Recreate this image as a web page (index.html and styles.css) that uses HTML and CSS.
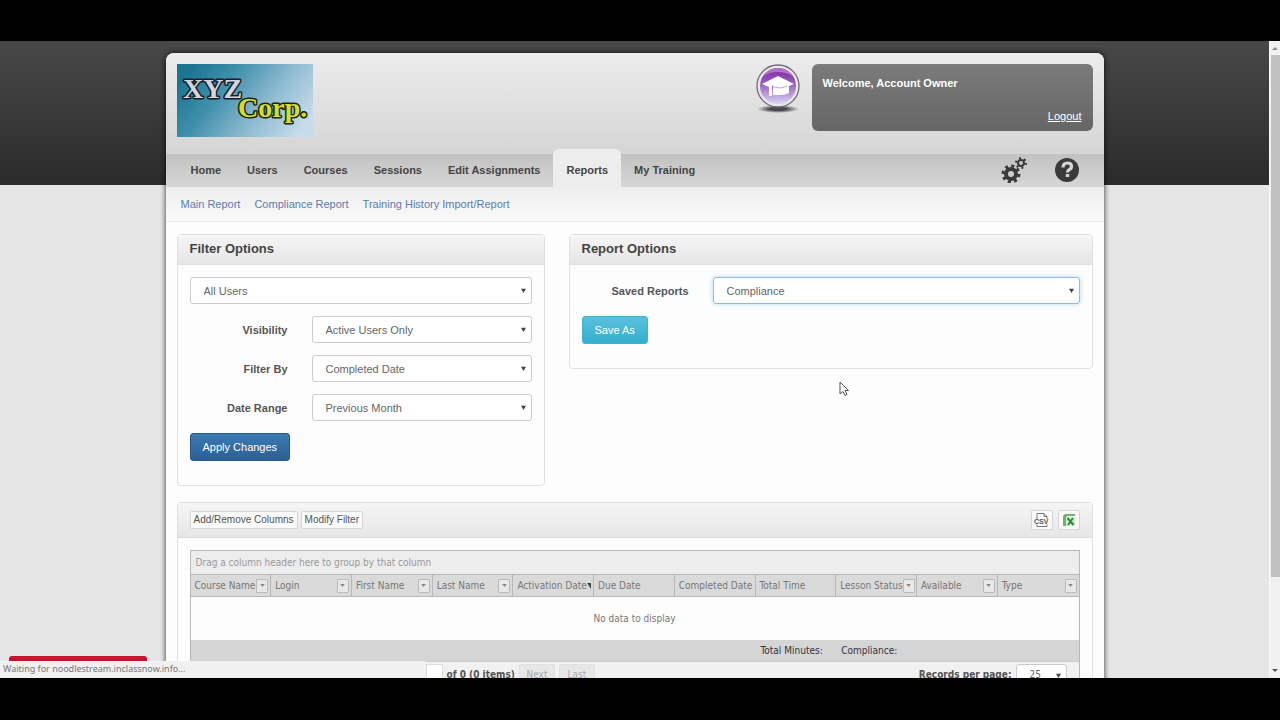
FILE: index.html
```html
<!DOCTYPE html>
<html lang="en">
<head>
<meta charset="utf-8">
<title>Reports</title>
<link rel="stylesheet" href="styles.css">
</head>
<body>
<div class="viewport">
  <div class="page">
    <div class="sheet">
      <header class="header">
        <svg class="logo" viewBox="0 0 136 73" role="img" aria-label="XYZ Corp.">
          <defs>
            <linearGradient id="sky" x1="0" y1="0.3" x2="1" y2="0.7">
              <stop offset="0" stop-color="#1b7592"/><stop offset="0.3" stop-color="#4090ab"/>
              <stop offset="0.65" stop-color="#8dbad0"/><stop offset="1" stop-color="#c6dcea"/>
            </linearGradient>
          </defs>
          <rect width="136" height="73" fill="url(#sky)"/>
          <g font-family="Liberation Serif, serif" font-weight="bold" stroke-linejoin="round" paint-order="stroke">
            <text x="6" y="34" font-size="28" fill="#d5d3dc" stroke="#15202a" stroke-width="3">XYZ</text>
            <text x="61" y="53" font-size="28" fill="#d3df2b" stroke="#1d2408" stroke-width="3">Corp.</text>
          </g>
        </svg>
        <div class="account">
          <svg class="badge" viewBox="0 0 46 52" aria-hidden="true">
            <defs>
              <linearGradient id="orb" x1="0" y1="0" x2="0" y2="1">
                <stop offset="0" stop-color="#7b2a9c"/><stop offset="0.45" stop-color="#9b5fc0"/><stop offset="1" stop-color="#d9d6f6"/>
              </linearGradient>
              <radialGradient id="shade"><stop offset="0.4" stop-color="#4b4650"/><stop offset="1" stop-color="#4b4650" stop-opacity="0"/></radialGradient>
            </defs>
            <ellipse cx="23" cy="45" rx="21" ry="4" fill="url(#shade)"/>
            <circle cx="23" cy="22" r="21" fill="#e9e6ee" stroke="#6d6a72" stroke-width="1.3"/>
            <circle cx="23" cy="22" r="18" fill="url(#orb)"/>
            <path d="M8 12Q13 4 23 4t15 8q-7-4-15-4T8 12z" fill="#c58bd8" opacity=".7"/>
            <path d="M7 20 23 12l16 8-5 2v7q-4 2-8 2h-8v-9l-1-1v11h-3v-9z" fill="#fff"/>
            <path d="m18 23 8 1 6-2" fill="none" stroke="#c3a5df"/>
          </svg>
          <div class="welcome">
            <strong>Welcome, Account Owner</strong>
            <a href="#">Logout</a>
          </div>
        </div>
      </header>
      <nav class="nav">
        <a href="#">Home</a><a href="#">Users</a><a href="#">Courses</a><a href="#">Sessions</a><a href="#">Edit Assignments</a><a href="#" class="current">Reports</a><a href="#">My Training</a>
        <div class="tools">
          <button type="button" aria-label="Settings">
            <svg viewBox="0 0 26 26" fill="none" stroke="#3b3b3b">
              <circle cx="10" cy="17" r="5" stroke-width="4"/>
              <circle cx="10" cy="17" r="8" stroke-width="3" stroke-dasharray="3 3.283"/>
              <circle cx="20" cy="6" r="3" stroke-width="2"/>
              <circle cx="20" cy="6" r="5" stroke-width="2" stroke-dasharray="2 3.236"/>
            </svg>
          </button>
          <button type="button" aria-label="Help">
            <svg viewBox="0 0 26 26" fill="none">
              <circle cx="13" cy="13" r="12" fill="#3b3b3b"/>
              <path d="M9 10.500q0-4.500 4.500-4.500 4 0 4 3.500 0 2-2.300 3.200-1.700.9-1.700 2.800" stroke="#d6d6d6" stroke-width="3.200"/>
              <path d="M11.800 17h3.400v3h-3.400z" fill="#d6d6d6"/>
            </svg>
          </button>
        </div>
      </nav>
      <div class="subnav"><a href="#">Main Report</a><a href="#">Compliance Report</a><a href="#">Training History Import/Report</a></div>
      <main class="content">
        <div class="panels">
          <section class="panel filter">
            <h2>Filter Options</h2>
            <form class="fields">
              <select class="wide" aria-label="Users"><option>All Users</option></select>
              <label for="visibility">Visibility</label><select id="visibility"><option>Active Users Only</option></select>
              <label for="filterby">Filter By</label><select id="filterby"><option>Completed Date</option></select>
              <label for="range">Date Range</label><select id="range"><option>Previous Month</option></select>
              <button type="button" class="btn primary">Apply Changes</button>
            </form>
          </section>
          <section class="panel report">
            <h2>Report Options</h2>
            <form class="fields">
              <label for="saved">Saved Reports</label><select id="saved" class="active"><option>Compliance</option></select>
              <button type="button" class="btn info">Save As</button>
            </form>
          </section>
        </div>
        <section class="panel results">
          <div class="toolbar">
            <button type="button" class="small">Add/Remove Columns</button>
            <button type="button" class="small">Modify Filter</button>
            <button type="button" class="small export first" aria-label="Export to CSV">
              <svg viewBox="0 0 16 16"><path d="M3 7V1.500h7l3 3V7M10 1.500v3h3M3 12.500v2h10v-2" fill="none" stroke="#777"/><text x="0" y="12" font-family="Liberation Sans, sans-serif" font-size="7" font-weight="bold" fill="#555">CSV</text></svg>
            </button>
            <button type="button" class="small export" aria-label="Export to Excel">
              <svg viewBox="0 0 16 16"><path d="M2 14V5q0-3 3-3h9v2H7Q5 4 5 6v8z" fill="#69b56a"/><path d="M5 5h9v9H5z" fill="#d5ecd2"/><path d="m6.500 6 6 7M12 6l-5 7" stroke="#32893a" stroke-width="2"/></svg>
            </button>
          </div>
          <div class="grid">
            <div class="grouping">Drag a column header here to group by that column</div>
            <table>
              <thead><tr>
                <th><div>Course Name<button type="button" aria-label="Filter Course Name"></button></div></th>
                <th><div>Login<button type="button" aria-label="Filter Login"></button></div></th>
                <th><div>First Name<button type="button" aria-label="Filter First Name"></button></div></th>
                <th><div>Last Name<button type="button" aria-label="Filter Last Name"></button></div></th>
                <th><div>Activation Date<svg class="sort" viewBox="0 0 4 6"><path d="M0 0h4v6z" fill="#444"/></svg></div></th>
                <th><div>Due Date</div></th>
                <th><div>Completed Date</div></th>
                <th><div>Total Time</div></th>
                <th><div>Lesson Status<button type="button" aria-label="Filter Lesson Status"></button></div></th>
                <th><div>Available<button type="button" aria-label="Filter Available"></button></div></th>
                <th><div>Type<button type="button" aria-label="Filter Type"></button></div></th>
              </tr></thead>
              <tbody><tr><td colspan="11">No data to display</td></tr></tbody>
              <tfoot><tr><td colspan="7"></td><td>Total Minutes:</td><td colspan="3">Compliance:</td></tr></tfoot>
            </table>
            <div class="pager">
              <input type="text" aria-label="Page number">
              <span>of 0 (0 items)</span>
              <button type="button" disabled>Next</button>
              <button type="button" disabled>Last</button>
              <label for="perpage">Records per page:</label>
              <select id="perpage"><option>25</option></select>
            </div>
          </div>
        </section>
      </main>
    </div>
    <div class="feedback"></div>
    <div class="status">Waiting for noodlestream.inclassnow.info...</div>
  </div>
  <div class="scrollbar">
    <svg viewBox="0 0 10 14"><path d="m2 9 3-3 3 3z" fill="#8a8a8a"/></svg>
    <div class="thumb"></div>
    <svg viewBox="0 0 10 14"><path d="m2 5 3 3 3-3z" fill="#555"/></svg>
  </div>
  <svg class="cursor" viewBox="0 0 10 16"><path d="M1 1v12l3-2.500 2 4 2-1-2-4h3.500z" fill="#fff" stroke="#555"/></svg>
</div>
</body>
</html>
```
FILE: styles.css
```css
* { box-sizing: border-box; }
body {
  margin: 0;
  height: 100vh;
  padding: 41px 0 42px;
  display: flex;
  background: #000;
  color: #555;
  font: 11px/16px "Liberation Sans", Arial, sans-serif;
}
button, select, input { font: inherit; color: inherit; margin: 0; }
a { text-decoration: none; color: inherit; }
.viewport { flex: 1; display: flex; position: relative; overflow: hidden; }
.page {
  flex: 1;
  min-width: 0;
  position: relative;
  overflow: hidden;
  padding: 12px 16px 0;
  background: linear-gradient(#484848, #2b2b2b) top / 100% 144px no-repeat #e6e6e6;
}
.sheet {
  max-width: 938px;
  margin: 0 auto;
  background: #fdfdfd;
  border-radius: 8px 8px 0 0;
  box-shadow: 0 0 5px 1px rgba(0, 0, 0, 0.6);
}

/* Header */
.header {
  display: flex;
  justify-content: space-between;
  align-items: flex-start;
  min-height: 101px;
  padding: 11px 11px 16px;
  border-radius: 8px 8px 0 0;
  background: linear-gradient(#ececec, #d5d5d5);
}
.logo { width: 136px; height: 73px; }
.account { display: flex; gap: 11px; }
.badge { width: 46px; height: 52px; }
.welcome {
  display: flex;
  flex-direction: column;
  justify-content: space-between;
  width: 281px;
  height: 67px;
  padding: 11px 11px 7px;
  border-radius: 6px;
  background: linear-gradient(#7b7b7b, #666);
  color: #fff;
}
.welcome a { align-self: flex-end; text-decoration: underline; }

/* Navigation */
.nav {
  display: flex;
  align-items: flex-end;
  height: 33px;
  padding-left: 12px;
  background: linear-gradient(#c2c2c2, #d6d6d6);
  color: #444;
  font-weight: bold;
}
.nav > a { padding: 8px 13px 9px; }
.nav .current { padding-top: 13px; border-radius: 6px 6px 0 0; background: #ededed; }
.tools { display: flex; gap: 27px; margin-left: auto; padding: 0 24px 4px 0; }
.tools button { padding: 0; border: 0; background: none; }
.tools svg { display: block; width: 26px; height: 26px; }
.subnav {
  display: flex;
  gap: 14px;
  padding: 9px 15px;
  border-bottom: 1px solid #eee;
  background: linear-gradient(#ededed, #fafafa);
  color: #5b7bb0;
}

/* Panels */
.content { padding: 12px 11px 0; }
.panels { display: grid; grid-template-columns: 368fr 524fr; gap: 24px; align-items: start; }
.panel { border: 1px solid #e0e0e0; border-radius: 4px; background: #fdfdfd; }
.panel h2 {
  margin: 0;
  padding: 6px 12px 7px;
  border-bottom: 1px solid #e0e0e0;
  background: linear-gradient(#f5f5f5, #e6e6e6);
  color: #444;
  font-size: 13px;
  line-height: 16px;
}
.fields {
  display: grid;
  grid-template-columns: 98px 1fr;
  gap: 12px 24px;
  padding: 12px 12px 24px;
  align-items: center;
}
.report .fields { grid-template-columns: 107px 1fr; }
.fields label { text-align: right; font-weight: bold; }
.wide { grid-column: 1 / -1; }
.fields select, .pager select {
  appearance: none;
  min-width: 0;
  height: 27px;
  padding: 0 13px;
  border: 1px solid #ccc;
  border-radius: 3px;
  color: #666;
  background: url("data:image/svg+xml,%3Csvg xmlns='http://www.w3.org/2000/svg' viewBox='0 0 6 6'%3E%3Cpath d='M0 1h6L3 6z' fill='%23444'/%3E%3C/svg%3E") right 5px center / 5px 5px no-repeat #fff;
}
.fields .active { border-color: #8fbbdf; box-shadow: 0 0 5px #b5d9ef; }
.btn { justify-self: start; height: 28px; padding: 0 12px; border-radius: 3px; color: #fff; white-space: nowrap; }
.primary { border: 1px solid #285a8c; background: linear-gradient(#3b7ab5, #2b5f95); }
.info { border: 1px solid #3fb3cf; background: linear-gradient(#5bc0de, #31b0cd); }

/* Results */
.results { margin-top: 16px; border-bottom: 0; }
.toolbar {
  display: flex;
  gap: 3px;
  align-items: center;
  height: 35px;
  padding: 0 12px;
  border-bottom: 1px solid #ddd;
  background: linear-gradient(#f5f5f5, #e6e6e6);
}
.small {
  height: 18px;
  padding: 0 3px;
  border: 1px solid #d5d5d5;
  border-radius: 2px;
  background: #fafafa;
  font-size: 10px;
  line-height: 16px;
}
.export { width: 22px; height: 20px; padding: 1px 2px; }
.export.first { margin: 0 2px 0 auto; }
.export svg { display: block; width: 16px; height: 16px; }
.grid {
  margin: 12px 12px 0;
  border: 1px solid #b8b8b8;
  font: 10px/14px "DejaVu Sans Condensed", "Noto Sans", sans-serif;
  color: #777;
}
.grouping { padding: 5px 5px 4px; border-bottom: 1px solid #b8b8b8; background: #ededed; color: #999; }
.grid table { width: 100%; table-layout: fixed; border-collapse: separate; border-spacing: 0; }
.grid th {
  height: 22px;
  padding: 0 2px 0 4px;
  border-right: 1px solid #b8b8b8;
  border-bottom: 1px solid #b8b8b8;
  background: #dadada;
  font-weight: normal;
  text-align: left;
  white-space: nowrap;
}
.grid th:last-child { border-right: 0; }
.grid th div { display: flex; align-items: center; justify-content: space-between; }
.grid th button {
  flex: none;
  width: 12px;
  height: 14px;
  padding: 0;
  border: 1px solid #bbb;
  border-radius: 1px;
  background: url("data:image/svg+xml,%3Csvg xmlns='http://www.w3.org/2000/svg' viewBox='0 0 6 4'%3E%3Cpath d='M0 0h6L3 4z' fill='%23888'/%3E%3C/svg%3E") center / 5px 3px no-repeat #e8e8e8;
}
.sort { flex: none; width: 4px; height: 6px; }
.grid tbody td { height: 43px; padding: 0; text-align: center; }
.grid tfoot td { height: 21px; padding: 0 5px; background: #d5d5d5; color: #334; white-space: nowrap; }
.pager {
  display: flex;
  align-items: center;
  gap: 4px;
  padding: 2px 12px 3px 235px;
  border-top: 1px solid #ccc;
  background: #f1f1f1;
  color: #555;
  font-weight: bold;
}
.pager input { width: 17px; height: 22px; border: 1px solid #ddd; background: #fff; }
.pager button { width: 36px; height: 22px; padding: 0; border: 1px solid #e0e0e0; border-radius: 2px; background: #e6e6e6; color: #aaa; font-weight: normal; }
.pager label { margin-left: auto; }
.pager select { width: 51px; height: 22px; font-weight: normal; }

/* Browser overlays */
.feedback { position: absolute; left: 9px; bottom: 0; width: 138px; height: 22px; border-radius: 3px 3px 0 0; background: #c4142f; }
.status {
  position: absolute;
  left: 0;
  bottom: 0;
  width: 425px;
  height: 17px;
  padding-left: 3px;
  background: #f1f1f1;
  color: #777;
  font: 9px/16px "Noto Sans", sans-serif;
}
.scrollbar { width: 11px; display: flex; flex-direction: column; background: #f1f1f1; border-left: 1px solid #fafafa; }
.scrollbar svg { width: 10px; height: 14px; }
.thumb { height: 522px; margin: 0 0 auto 1px; background: #c1c1c1; }
.cursor { position: absolute; left: 839px; top: 340px; width: 10px; height: 16px; }
```
